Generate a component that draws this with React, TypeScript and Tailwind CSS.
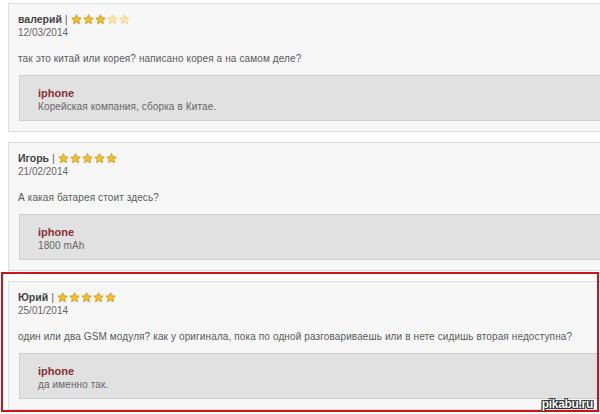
const comments = [
  {
    name: 'валерий',
    stars: 3,
    date: '12/03/2014',
    text: 'так это китай или корея? написано корея а на самом деле?',
    answer: 'Корейская компания, сборка в  Китае.',
  },
  {
    name: 'Игорь',
    stars: 5,
    date: '21/02/2014',
    text: 'А какая батарея стоит здесь?',
    answer: '1800 mAh',
  },
  {
    name: 'Юрий',
    stars: 5,
    date: '25/01/2014',
    text: 'один или два GSM модуля? как у оригинала, пока по одной разговариваешь или в нете сидишь вторая недоступна?',
    answer: 'да именно так.',
  },
];

function Star({ filled }: { filled: boolean }) {
  return (
    <svg width="11" height="11" viewBox="0 0 24 24" className="shrink-0">
      <path
        d="M12 1.5l3.1 6.6 7.2.9-5.3 5 1.4 7.1L12 17.6l-6.4 3.5 1.4-7.1-5.3-5 7.2-.9z"
        fill={filled ? '#f5c02a' : '#fbe7a8'}
        stroke={filled ? '#c98a12' : '#e8cf86'}
        strokeWidth="1.6"
        strokeLinejoin="round"
      />
    </svg>
  );
}

function Comment({ c }: { c: (typeof comments)[number] }) {
  return (
    <div className="mr-[-20px] border border-[#dedede] bg-[#f7f7f7] pl-[9px] pr-0 pt-[8px] pb-[10px]">
      <div className="flex items-center gap-[1px] leading-[14px]">
        <span className="text-[10.5px] font-bold text-[#444]">{c.name}</span>
        <span className="mx-[2px] text-[11px] text-[#666]">|</span>
        {[0, 1, 2, 3, 4].map((i) => (
          <Star key={i} filled={i < c.stars} />
        ))}
      </div>
      <div className="text-[10px] leading-[14px] text-[#666]">{c.date}</div>
      <div className="mt-[12px] text-[10px] leading-[14px] tracking-[0.12px] text-[#5a5a5a]">{c.text}</div>
      <div className="mt-[9px] ml-[1px] border border-[#cfcfcf] bg-[#e1e1e1] pl-[18px] pt-[10px] pb-[7px]">
        <div className="text-[11px] font-bold leading-[14px] text-[#8a2f33]">iphone</div>
        <div className="text-[10px] leading-[13px] tracking-[0.12px] text-[#666]">{c.answer}</div>
      </div>
    </div>
  );
}

export default function App() {
  return (
    <div
      className="relative h-[414px] w-[600px] overflow-hidden bg-white"
      style={{ fontFamily: '"Liberation Sans", Arial, sans-serif' }}
    >
      <div className="flex flex-col gap-[10px] pl-[8px] pt-[3px]">
        {comments.map((c) => (
          <Comment key={c.date} c={c} />
        ))}
      </div>
      <div className="pointer-events-none absolute left-[1px] top-[272px] h-[140px] w-[598px] border-2 border-[#c8141c]" />
      <div
        className="absolute right-[7px] top-[395px] text-[12px] font-bold tracking-[-0.3px] text-white"
        style={{ textShadow: '0 0 1px #000, 1px 1px 0 #333, -1px -1px 0 #333, 1px -1px 0 #333, -1px 1px 0 #333' }}
      >
        pikabu.ru
      </div>
    </div>
  );
}
